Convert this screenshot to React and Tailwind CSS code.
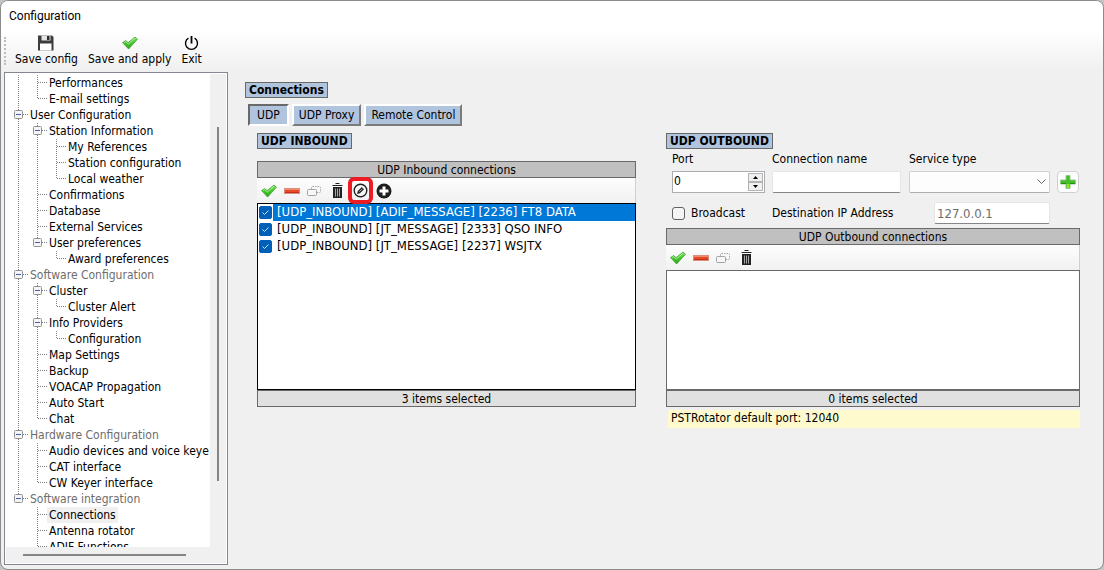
import { useState } from 'react';
import clsx from 'clsx';

// guides: v = line through, t = tee, l = last, b = box, e = box on the last branch, . = blank
const treeRows = [
  { guides: 'vt', label: 'Performances' },
  { guides: 'vl', label: 'E-mail settings' },
  { guides: 'b', label: 'User Configuration' },
  { guides: 'vb', label: 'Station Information' },
  { guides: 'vvt', label: 'My References' },
  { guides: 'vvt', label: 'Station configuration' },
  { guides: 'vvl', label: 'Local weather' },
  { guides: 'vt', label: 'Confirmations' },
  { guides: 'vt', label: 'Database' },
  { guides: 'vt', label: 'External Services' },
  { guides: 've', label: 'User preferences' },
  { guides: 'v.l', label: 'Award preferences' },
  { guides: 'b', label: 'Software Configuration', muted: true },
  { guides: 'vb', label: 'Cluster' },
  { guides: 'vvl', label: 'Cluster Alert' },
  { guides: 'vb', label: 'Info Providers' },
  { guides: 'vvl', label: 'Configuration' },
  { guides: 'vt', label: 'Map Settings' },
  { guides: 'vt', label: 'Backup' },
  { guides: 'vt', label: 'VOACAP Propagation' },
  { guides: 'vt', label: 'Auto Start' },
  { guides: 'vl', label: 'Chat' },
  { guides: 'b', label: 'Hardware Configuration', muted: true },
  { guides: 'vt', label: 'Audio devices and voice keye' },
  { guides: 'vt', label: 'CAT interface' },
  { guides: 'vl', label: 'CW Keyer interface' },
  { guides: 'e', label: 'Software integration', muted: true },
  { guides: '.t', label: 'Connections' },
  { guides: '.t', label: 'Antenna rotator' },
  { guides: '.t', label: 'ADIF Functions' },
];

const inbound = [
  '[UDP_INBOUND] [ADIF_MESSAGE] [2236] FT8 DATA',
  '[UDP_INBOUND] [JT_MESSAGE] [2333] QSO INFO',
  '[UDP_INBOUND] [JT_MESSAGE] [2237] WSJTX',
];

function Guide({ type }) {
  const box = type === 'b' || type === 'e';
  const full = type === 'v' || type === 't' || type === 'b';
  return (
    <svg width="19" height="16" className="shrink-0" aria-hidden="true">
      {type !== '.' && (
        <path d={full ? 'M9.5 0V16' : 'M9.5 0V8'} stroke="#808080" strokeDasharray="1 1" shapeRendering="crispEdges" />
      )}
      {type !== '.' && type !== 'v' && (
        <path d="M10 7.5H19" stroke="#808080" strokeDasharray="1 1" shapeRendering="crispEdges" />
      )}
      {box && (
        <>
          <rect x="5.5" y="3.5" width="8" height="8" rx="1" fill="#f4f4f4" stroke="#919191" />
          <path d="M7 7.5H12" stroke="#3f5fae" />
        </>
      )}
    </svg>
  );
}

function CheckIcon() {
  return (
    <svg width="16" height="14" viewBox="0 0 16 14" aria-hidden="true">
      <defs>
        <linearGradient id="green" x1="0" y1="0" x2="0" y2="1">
          <stop offset="0" stopColor="#8be36a" />
          <stop offset="0.5" stopColor="#45c92b" />
          <stop offset="1" stopColor="#2c9f1c" />
        </linearGradient>
      </defs>
      <path d="M0.5 6.6 3.6 4.6 6.2 6.6 13 1 15.5 3.2 6.6 13Z" fill="url(#green)" stroke="#3a9a2c" strokeWidth="0.7" strokeLinejoin="round" />
      <path d="M2 6.6 3.6 5.6 6.3 8 12.9 2.3" fill="none" stroke="#c2f5ac" strokeWidth="0.8" />
    </svg>
  );
}

function MinusIcon() {
  return (
    <svg width="16" height="6" viewBox="0 0 16 6" aria-hidden="true">
      <rect x="0.5" y="0.5" width="15" height="5" fill="#e8492a" stroke="#d9907c" />
      <path d="M1 1.5H15" stroke="#f58a68" />
      <path d="M1 4.5H15" stroke="#c3301a" />
    </svg>
  );
}

function CopyIcon() {
  return (
    <svg width="15" height="12" viewBox="0 0 15 12" fill="none" stroke="#a3a3a3" aria-hidden="true">
      <rect x="4.5" y="1.5" width="9" height="6" rx="1" strokeDasharray="1.5 1" />
      <rect x="0.5" y="4.5" width="9" height="6" rx="1" fill="#f7f7f7" />
    </svg>
  );
}

function TrashIcon() {
  return (
    <svg width="11" height="15" viewBox="0 0 11 15" aria-hidden="true">
      <path d="M3.5 0.5H7.5" stroke="#222" />
      <path d="M0.5 2.5H10.5" stroke="#222" />
      <path d="M1 4H10V15H1Z" fill="#222" />
      <path d="M3.5 5.5V13.5M5.5 5.5V13.5M7.5 5.5V13.5" stroke="#b5b5b5" strokeWidth="0.9" />
    </svg>
  );
}

function EditIcon() {
  return (
    <svg width="15" height="15" viewBox="0 0 15 15" aria-hidden="true">
      <circle cx="7.5" cy="7.5" r="6.3" fill="none" stroke="#222" strokeWidth="1.4" />
      <path d="M4 11 4.8 8 8.8 4 11 6.2 7 10.2Z" fill="#222" />
      <path d="M6.2 8.8 9.4 5.6" stroke="#fff" strokeWidth="0.6" />
    </svg>
  );
}

function AddIcon() {
  return (
    <svg width="16" height="16" viewBox="0 0 16 16" aria-hidden="true">
      <circle cx="8" cy="8" r="7.5" fill="#1e1e1e" />
      <path d="M8 3.5V12.5M3.5 8H12.5" stroke="#fff" strokeWidth="3" />
    </svg>
  );
}

function SaveIcon() {
  return (
    <svg width="16" height="16" viewBox="0 0 16 16" aria-hidden="true">
      <path d="M0 0.5H14L15.5 2V15.5H0Z" fill="#3c3c3c" />
      <path d="M3.5 0.5H12.5V5.5H3.5Z" fill="#e4e4e4" />
      <path d="M9 1H11.5V5H9Z" fill="#2b2b2b" />
      <path d="M2 8.5H13.5V15.5H2Z" fill="#fff" />
    </svg>
  );
}

function PowerIcon() {
  return (
    <svg width="15" height="16" viewBox="0 0 15 16" fill="none" stroke="#000" strokeWidth="1.4" aria-hidden="true">
      <path d="M7.5 1V8.5" strokeWidth="1.8" />
      <path d="M4.4 3.2A6 6 0 1 0 10.6 3.2" />
    </svg>
  );
}

function PlusIcon() {
  return (
    <svg width="16" height="14" viewBox="0 0 16 14" aria-hidden="true">
      <path d="M6 0.5H10V5H15.5V9H10V13.5H6V9H0.5V5H6Z" fill="#46bd27" stroke="#8fc98a" />
      <path d="M7 9H9V13H7Z" fill="#8ded19" />
      <path d="M1 8.5H6M10 8.5H15" stroke="#268f12" />
    </svg>
  );
}

function Tag({ children }) {
  return (
    <h2 className="flex h-4 w-fit items-center border border-[#696969] bg-[#b0c4de] px-[3px] font-bold whitespace-nowrap">
      {children}
    </h2>
  );
}

function IconButton({ label, children }) {
  return (
    <button type="button" aria-label={label} className="flex w-[23px] shrink-0 items-center justify-center">
      {children}
    </button>
  );
}

function ListToolbar({ children }) {
  return (
    <div className="flex h-[25px] border-r border-[#d0d0d0] bg-linear-to-b from-[#fdfdfd] to-[#f1f1f1]">
      <IconButton label="Select all"><CheckIcon /></IconButton>
      <IconButton label="Deselect all"><MinusIcon /></IconButton>
      <IconButton label="Invert selection"><CopyIcon /></IconButton>
      <IconButton label="Delete"><TrashIcon /></IconButton>
      {children}
    </div>
  );
}

function ListHeader({ children }) {
  return <h3 className="h-[17px] border border-[#696969] bg-[#c0c0c0] text-center leading-4">{children}</h3>;
}

function ListFooter({ children }) {
  return <p className="h-[17px] border border-[#696969] bg-[#e0e0e0] text-center leading-4">{children}</p>;
}

export default function App() {
  const [tab, setTab] = useState('UDP');
  const [checked, setChecked] = useState([true, true, true]);

  const toggle = (i) => setChecked(checked.map((c, n) => (n === i ? !c : c)));

  return (
    <div className="h-screen bg-[#c4c4c4] font-['DejaVu_Sans_Condensed','DejaVu_Sans',sans-serif] text-[12px] leading-4 text-black">
      <div className="flex h-full flex-col overflow-hidden rounded-lg border border-[#8c8c8c] bg-[#f0f0f0]">
        <header className="flex h-[30px] shrink-0 items-center bg-white px-2">
          <h1 className="font-[Roboto,sans-serif] text-[12px]">Configuration</h1>
        </header>

        <div className="flex h-10 shrink-0 items-center bg-linear-to-b from-white via-[#f7f7f7] to-[#f0f0f0] pl-[3px]">
          <div className="h-7 border-l-2 border-dotted border-[#bdbdbd]" />
          <div className="flex gap-2.5 pl-[9px]">
            <button type="button" className="flex flex-col items-center whitespace-nowrap">
              <span className="flex h-4 items-center"><SaveIcon /></span>
              Save config
            </button>
            <button type="button" className="flex flex-col items-center whitespace-nowrap">
              <span className="flex h-4 items-center"><CheckIcon /></span>
              Save and apply
            </button>
            <button type="button" className="flex flex-col items-center whitespace-nowrap">
              <span className="flex h-4 items-center"><PowerIcon /></span>
              Exit
            </button>
          </div>
        </div>

        <div className="flex min-h-0 flex-1 pb-1 pl-[3px]">
          <aside className="mt-px flex w-[224px] shrink-0 flex-col border border-[#828790] bg-white p-px">
            <div className="flex min-h-0 flex-1">
              <ul className="min-w-0 flex-1 overflow-hidden pl-[3px] pt-px">
                {treeRows.map((row, i) => (
                  <li key={i} className="flex h-4">
                    {row.guides.split('').map((g, n) => <Guide key={n} type={g} />)}
                    <a
                      href="#"
                      className={clsx(
                        'px-0.5 whitespace-nowrap',
                        row.muted && 'text-[#6d6d6d]',
                        row.label === 'Connections' && 'bg-[#f0f0f0]'
                      )}
                    >
                      {row.label}
                    </a>
                  </li>
                ))}
              </ul>
              <div className="flex w-4 shrink-0 flex-col items-center bg-[#f0f0f0] pt-[53px] pb-[66px]">
                <div className="w-0.5 flex-1 bg-[#858585]" />
              </div>
            </div>
            <div className="flex h-4 shrink-0 items-center bg-[#f0f0f0] pr-10 pl-[17px]">
              <div className="h-0.5 flex-1 bg-[#858585]" />
            </div>
          </aside>

          <main className="min-w-0 flex-1 pt-[11px] pr-[23px] pl-[17px]">
            <Tag>Connections</Tag>

            <div className="mt-1.5 ml-[3px] flex gap-[3px]">
              {['UDP', 'UDP Proxy', 'Remote Control'].map((name) => (
                <button
                  key={name}
                  type="button"
                  onClick={() => setTab(name)}
                  className={clsx(
                    'h-[22px] border-2 bg-[#b0c4de] whitespace-nowrap',
                    tab === name
                      ? 'border-t-[#696969] border-r-white border-b-white border-l-[#696969] px-[7px]'
                      : 'border-t-white border-r-[#7b7b7b] border-b-[#7b7b7b] border-l-white px-[5px]'
                  )}
                >
                  {name}
                </button>
              ))}
            </div>

            <div className="mt-[7px] grid grid-cols-[379fr_414fr] gap-[30px] pl-3">
              <section>
                <Tag>UDP INBOUND</Tag>
                <div className="mt-3">
                  <ListHeader>UDP Inbound connections</ListHeader>
                  <ListToolbar>
                    <div className="relative flex">
                      <IconButton label="Edit"><EditIcon /></IconButton>
                      <span className="pointer-events-none absolute -inset-x-px -inset-y-px rounded-md border-4 border-[#ed1c24]" />
                    </div>
                    <IconButton label="Add"><AddIcon /></IconButton>
                  </ListToolbar>
                  <ul className="h-[187px] border border-black bg-white">
                    {inbound.map((item, i) => (
                      <li key={item}>
                        <label className="flex h-[17px] items-center pl-px">
                          <span className="relative flex">
                            <input
                              type="checkbox"
                              checked={checked[i]}
                              onChange={() => toggle(i)}
                              className="size-[13px] appearance-none rounded-xs border border-[#005fb8] bg-white checked:bg-[#005fb8]"
                            />
                            {checked[i] && (
                              <svg width="13" height="13" viewBox="0 0 13 13" className="pointer-events-none absolute inset-0" aria-hidden="true">
                                <path d="M3.5 6.5 5.5 8.5 9.5 4.5" fill="none" stroke="#cfe3f5" />
                              </svg>
                            )}
                          </span>
                          <span className={clsx('ml-px h-full flex-1 pl-1 text-[13px] whitespace-nowrap', i === 0 && 'bg-[#0078d7] text-white')}>
                            {item}
                          </span>
                        </label>
                      </li>
                    ))}
                  </ul>
                  <ListFooter>3 items selected</ListFooter>
                </div>
              </section>

              <section>
                <Tag>UDP OUTBOUND</Tag>
                <form className="pt-0.5" onSubmit={(e) => e.preventDefault()}>
                  <div className="flex items-end pl-1.5">
                    <div className="w-[93px]">
                      <label htmlFor="port" className="block h-5">Port</label>
                      <div className="flex h-[22px] border border-[#abadb3] bg-white">
                        <input id="port" defaultValue="0" className="min-w-0 flex-1 pb-0.5 pl-px outline-none" />
                        <div className="flex w-4 flex-col py-px pr-px">
                          <button type="button" aria-label="Increase port" className="flex flex-1 items-center justify-center border border-[#b4b4b4] bg-[#f0f0f0]">
                            <svg width="5" height="3" aria-hidden="true"><path d="M0 3 2.5 0 5 3Z" /></svg>
                          </button>
                          <button type="button" aria-label="Decrease port" className="flex flex-1 items-center justify-center border border-[#b4b4b4] bg-[#f0f0f0]">
                            <svg width="5" height="3" aria-hidden="true"><path d="M0 0 2.5 3 5 0Z" /></svg>
                          </button>
                        </div>
                      </div>
                    </div>
                    <div className="ml-[7px] flex-1">
                      <label htmlFor="name" className="block h-5 whitespace-nowrap">Connection name</label>
                      <input id="name" className="block h-[22px] w-full rounded-xs border border-[#e5e5e5] border-b-[#868686] bg-white px-1 outline-none" />
                    </div>
                    <div className="ml-2 w-[141px]">
                      <label htmlFor="service" className="block h-5">Service type</label>
                      <div className="relative">
                        <select id="service" className="block h-[22px] w-full appearance-none rounded-xs border border-[#d0d0d0] border-b-[#adadad] bg-[#fdfdfd] px-1 outline-none">
                          <option value="" />
                        </select>
                        <svg width="9" height="6" className="pointer-events-none absolute top-2 right-1" fill="none" stroke="#606060" aria-hidden="true">
                          <path d="M0.5 0.5 4.5 4.5 8.5 0.5" />
                        </svg>
                      </div>
                    </div>
                    <button type="button" aria-label="Add connection" className="mr-px ml-[7px] flex size-[22px] items-center justify-center rounded-sm border border-[#d0d0d0] bg-[#fdfdfd]">
                      <PlusIcon />
                    </button>
                  </div>
                  <div className="mt-[9px] mb-1 flex h-[22px] items-center pl-1.5">
                    <label className="flex w-[100px] items-center gap-1.5">
                      <input type="checkbox" className="size-[13px] appearance-none rounded-[3px] border border-[#626262] bg-[#f5f5f5] checked:bg-[#005fb8]" />
                      Broadcast
                    </label>
                    <label htmlFor="ip" className="flex-1 whitespace-nowrap">Destination IP Address</label>
                    <input id="ip" defaultValue="127.0.0.1" className="mr-[30px] h-[22px] w-[116px] rounded-xs border border-[#e5e5e5] border-b-[#868686] bg-white px-0.5 text-[13px] text-[#6d6d6d] outline-none" />
                  </div>
                </form>
                <ListHeader>UDP Outbound connections</ListHeader>
                <ListToolbar />
                <div className="h-[120px] border border-[#696969] bg-white" />
                <ListFooter>0 items selected</ListFooter>
                <p className="mt-[3px] ml-0.5 h-[18px] bg-[#fffacd] pl-[3px]">PSTRotator default port: 12040</p>
              </section>
            </div>
          </main>
        </div>
      </div>
    </div>
  );
}
